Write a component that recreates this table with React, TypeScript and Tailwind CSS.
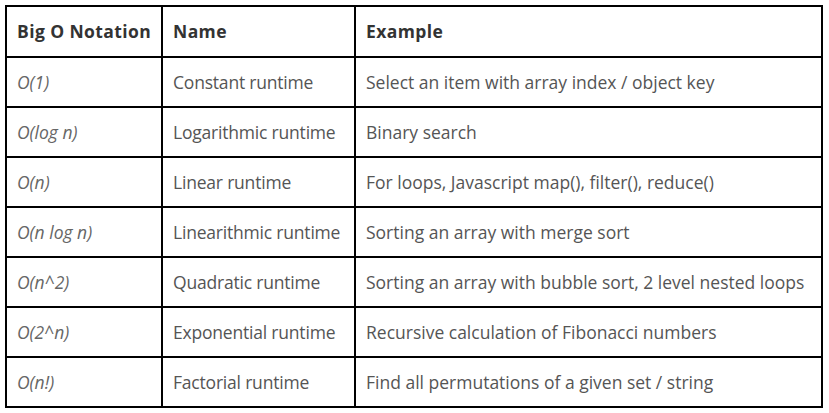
import React from "react";

const rows = [
  ["O(1)", "Constant runtime", "Select an item with array index / object key"],
  ["O(log n)", "Logarithmic runtime", "Binary search"],
  ["O(n)", "Linear runtime", "For loops, Javascript map(), filter(), reduce()"],
  ["O(n log n)", "Linearithmic runtime", "Sorting an array with merge sort"],
  ["O(n^2)", "Quadratic runtime", "Sorting an array with bubble sort, 2 level nested loops"],
  ["O(2^n)", "Exponential runtime", "Recursive calculation of Fibonacci numbers"],
  ["O(n!)", "Factorial runtime", "Find all permutations of a given set / string"],
];

const App: React.FC = () => {
  return (
    <div className="w-[829px] h-[413px] bg-white pt-[5px] pl-[5px] font-['Open_Sans',sans-serif]">
      <table className="border-collapse border-2 border-black w-[818px] table-fixed text-[17.5px] whitespace-nowrap">
        <colgroup>
          <col className="w-[156px]" />
          <col className="w-[193px]" />
          <col />
        </colgroup>
        <thead>
          <tr className="h-[51px]">
            <th className="border-2 border-black text-left px-[10px] font-bold text-[#333] tracking-[0.4px]">Big O Notation</th>
            <th className="border-2 border-black text-left px-[10px] font-bold text-[#333] tracking-[0.4px]">Name</th>
            <th className="border-2 border-black text-left px-[10px] font-bold text-[#333] tracking-[0.4px]">Example</th>
          </tr>
        </thead>
        <tbody>
          {rows.map((r, i) => (
            <tr key={i} className="h-[50px]">
              <td className="border-2 border-black px-[10px] italic text-[#666]">{r[0]}</td>
              <td className="border-2 border-black px-[10px] text-[#555] tracking-[-0.2px]">{r[1]}</td>
              <td className="border-2 border-black px-[10px] text-[#555]">{r[2]}</td>
            </tr>
          ))}
        </tbody>
      </table>
    </div>
  );
};

export default App;
